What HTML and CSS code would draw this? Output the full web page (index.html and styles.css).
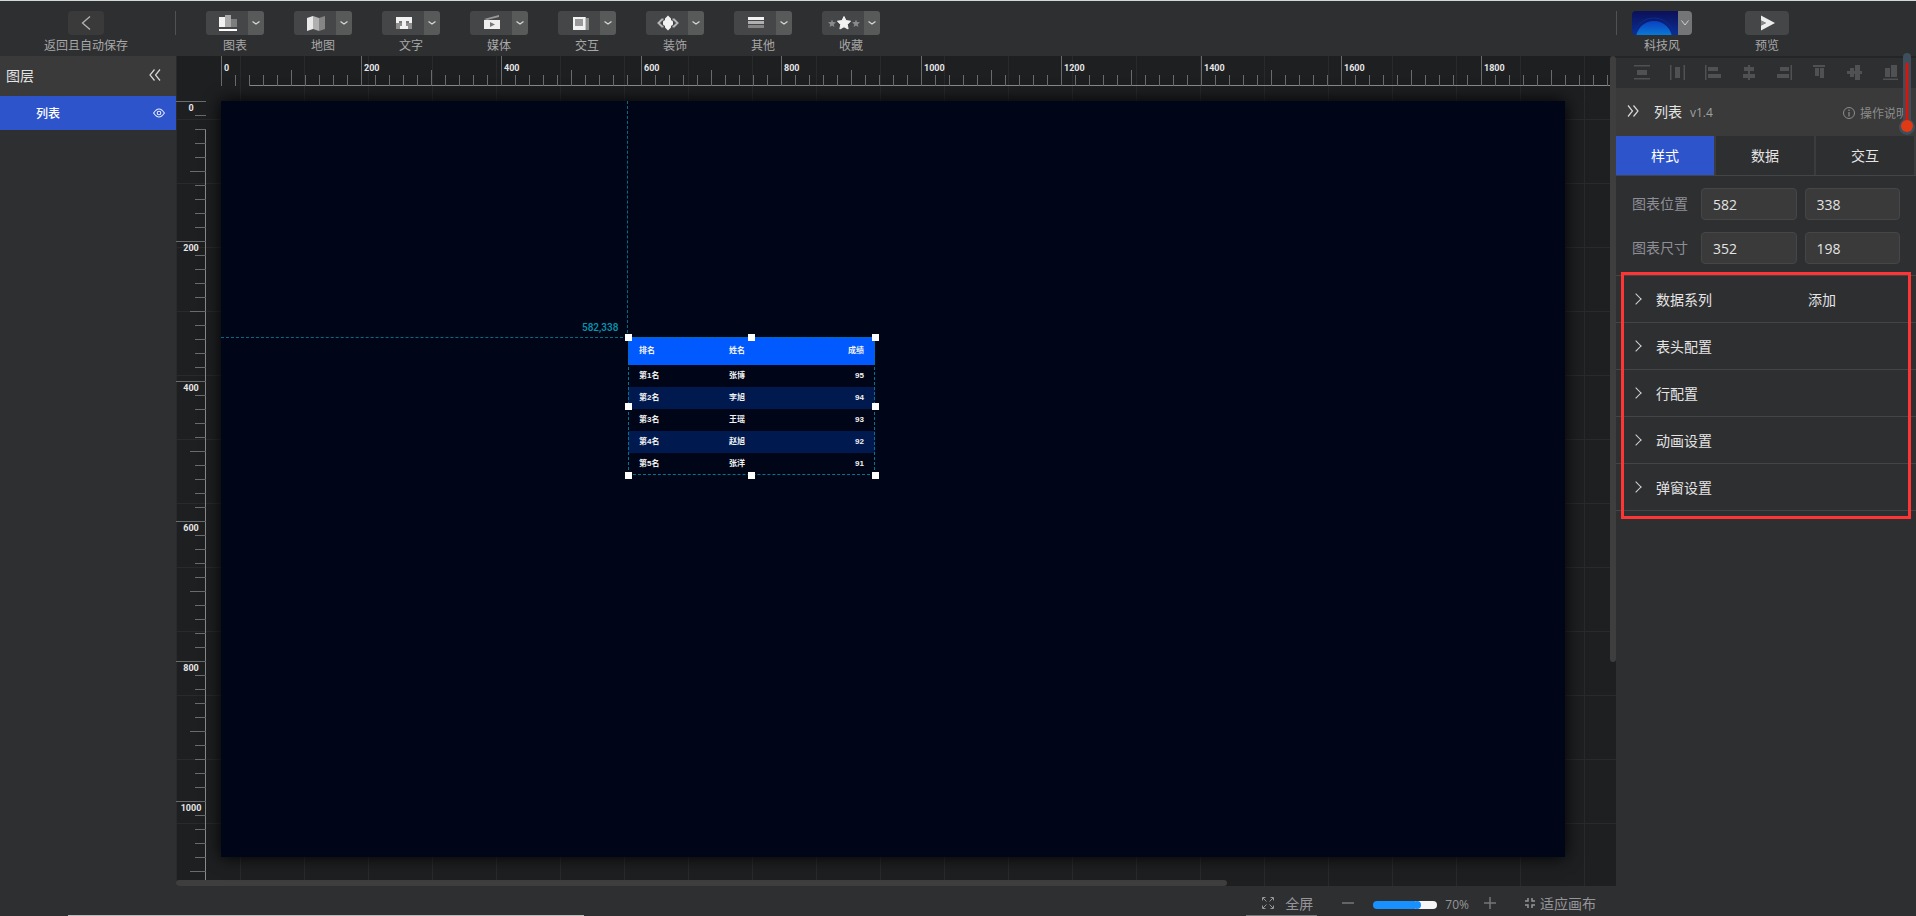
FILE: index.html
```html
<!DOCTYPE html>
<html lang="zh-CN">
<head>
  <meta charset="UTF-8" />
  <title>列表</title>
  <link rel="stylesheet" href="styles.css">
</head>
<body>
  <header class="topbar">
    <div class="back">
      <button class="back-btn" aria-labelledby="backLabel">
        <svg width="10" height="14" viewBox="0 0 10 14"><path d="M9 0.5 1.5 7 9 13.5" fill="none" stroke="#b4b4b4" stroke-width="1.3"/></svg>
      </button>
      <span class="tool-label" id="backLabel">返回且自动保存</span>
    </div>
    <nav class="tools" id="tools"></nav>
    <div class="actions">
      <div class="tool">
        <div class="tool-box theme-box">
          <button class="theme-main" aria-label="科技风">
            <svg width="46" height="24" viewBox="0 0 46 24">
              <defs>
                <linearGradient id="sky" x1="0" y1="0" x2="0" y2="1"><stop offset="0" stop-color="#0c1058"/><stop offset="1" stop-color="#0a2f96"/></linearGradient>
                <linearGradient id="globe" gradientUnits="userSpaceOnUse" x1="0" y1="9" x2="0" y2="24"><stop offset="0" stop-color="#0b3cc0"/><stop offset="1" stop-color="#0a78d4"/></linearGradient>
              </defs>
              <rect width="46" height="24" fill="url(#sky)"/>
              <circle cx="22" cy="28" r="21" fill="none" stroke="#0c2f88"/>
              <circle cx="22" cy="28" r="18" fill="url(#globe)"/>
            </svg>
          </button>
          <button class="theme-drop" aria-label="切换主题">
            <svg width="8" height="6" viewBox="0 0 8 6"><path d="M0.5 0.5 4 5 7.5 0.5" fill="none" stroke="#d0d0d0"/></svg>
          </button>
        </div>
        <span class="tool-label">科技风</span>
      </div>
      <div class="tool">
        <button class="preview-btn" aria-label="预览">
          <svg width="14" height="16" viewBox="0 0 14 16"><path d="M0 0.5 14 8 0 15.5V10.500L5 8 0 5.500Z" fill="#ededed"/><path d="M0 5.500 5 8 0 10.500Z" fill="#888"/></svg>
        </button>
        <span class="tool-label">预览</span>
      </div>
    </div>
  </header>

  <main class="workspace">
    <aside class="layers">
      <div class="layers-head">
        <h2>图层</h2>
        <button class="icon-btn" aria-label="收起图层">
          <svg width="12" height="12" viewBox="0 0 12 12"><path d="M5.500 0.500 1 6 5.500 11.500M11 0.500 6.500 6 11 11.500" fill="none" stroke="#d8d8d8" stroke-width="1.2"/></svg>
        </button>
      </div>
      <div class="layer-item">
        <span>列表</span>
        <button class="icon-btn" aria-label="显示">
          <svg width="12" height="10" viewBox="0 0 12 10"><path d="M0.600 5Q6-3 11.400 5 6 13 0.600 5Z" fill="none" stroke="#e6ebff" stroke-width="1.100"/><circle cx="6" cy="5" r="1.800" fill="none" stroke="#e6ebff" stroke-width="1.100"/></svg>
        </button>
      </div>
    </aside>

    <section class="center">
      <div class="stage">
        <div class="ruler-x" id="rulerX"></div>
        <div class="ruler-y" id="rulerY"></div>
        <div class="canvas-wrap">
          <div class="canvas">
            <div class="guide-x"></div>
            <div class="guide-y"></div>
            <span class="coords">582,338</span>
            <div class="widget">
              <table class="rank">
                <thead><tr><th>排名</th><th>姓名</th><th>成绩</th></tr></thead>
                <tbody>
                  <tr><td>第1名</td><td>张博</td><td>95</td></tr>
                  <tr><td>第2名</td><td>李旭</td><td>94</td></tr>
                  <tr><td>第3名</td><td>王瑶</td><td>93</td></tr>
                  <tr><td>第4名</td><td>赵旭</td><td>92</td></tr>
                  <tr><td>第5名</td><td>张洋</td><td>91</td></tr>
                </tbody>
              </table>
              <i class="handle top left"></i>
              <i class="handle top mid"></i>
              <i class="handle top right"></i>
              <i class="handle center-y left"></i>
              <i class="handle center-y right"></i>
              <i class="handle bottom left"></i>
              <i class="handle bottom mid"></i>
              <i class="handle bottom right"></i>
            </div>
          </div>
        </div>
        <div class="scroll-y"></div>
        <div class="scroll-x"></div>
      </div>
      <footer class="statusbar">
        <button class="status-btn full">
          <svg width="12" height="12" viewBox="0 0 12 12"><path d="M4.500 4.500 1 1M0.500 3.500V0.500H3.500M7.500 4.500 11 1M8.500 0.500H11.500V3.500M4.500 7.500 1 11M0.500 8.500V11.500H3.500M7.500 7.500 11 11M8.500 11.500H11.500V8.500" fill="none" stroke="#96969a"/></svg>
          全屏
        </button>
        <button class="icon-btn" aria-label="缩小">
          <svg width="12" height="12" viewBox="0 0 12 12"><path d="M0 6H12" stroke="#77777b" stroke-width="1.500"/></svg>
        </button>
        <div class="zoom">
          <input type="range" id="zoomRange" min="0" max="100" value="70" aria-label="缩放">
          <label for="zoomRange">70%</label>
        </div>
        <button class="icon-btn" aria-label="放大">
          <svg width="12" height="12" viewBox="0 0 12 12"><path d="M0 6H12M6 0V12" stroke="#77777b" stroke-width="1.500"/></svg>
        </button>
        <button class="status-btn fit">
          <svg width="10" height="10" viewBox="0 0 10 10"><path d="M0 3H3V0M10 3H7V0M0 7H3V10M10 7H7V10" fill="none" stroke="#96969a" stroke-width="1.500"/></svg>
          适应画布
        </button>
      </footer>
    </section>

    <aside class="props">
      <div class="align-bar" id="alignBar"></div>
      <div class="props-head">
        <button class="icon-btn" aria-label="收起面板">
          <svg width="12" height="12" viewBox="0 0 12 12"><path d="M1 0.500 5.500 6 1 11.500M6.500 0.500 11 6 6.500 11.500" fill="none" stroke="#d8d8d8" stroke-width="1.200"/></svg>
        </button>
        <h2>列表</h2>
        <span class="version">v1.4</span>
        <a class="help" href="#">
          <svg width="12" height="12" viewBox="0 0 12 12"><circle cx="6" cy="6" r="5.500" fill="none" stroke="#8c8c8c"/><path d="M6 2.500V4M6 5V9.500" stroke="#8c8c8c" stroke-width="1.200"/></svg>
          操作说明
        </a>
      </div>
      <div class="tabs">
        <button class="tab active">样式</button>
        <button class="tab">数据</button>
        <button class="tab">交互</button>
      </div>
      <div class="fields">
        <div class="field">
          <label for="posX">图表位置</label>
          <input type="text" id="posX" value="582">
          <input type="text" value="338" aria-label="纵向位置">
        </div>
        <div class="field">
          <label for="sizeW">图表尺寸</label>
          <input type="text" id="sizeW" value="352">
          <input type="text" value="198" aria-label="高度">
        </div>
      </div>
      <div class="sections">
        <div class="section"><button class="section-toggle">数据系列</button><button class="add">添加</button></div>
        <div class="section"><button class="section-toggle">表头配置</button></div>
        <div class="section"><button class="section-toggle">行配置</button></div>
        <div class="section"><button class="section-toggle">动画设置</button></div>
        <div class="section"><button class="section-toggle">弹窗设置</button></div>
        <div class="highlight"></div>
      </div>
      <svg class="marker" width="18" height="84" viewBox="0 0 18 84">
        <path d="M5 69V6a4 4 0 0 1 8 0V69a8 8 0 1 1-8 0Z" fill="#3d4f5c"/>
        <path d="M9 13V76" stroke="#d3170d" stroke-width="3" stroke-linecap="round"/>
        <circle cx="9" cy="75" r="6" fill="#e03a14"/>
      </svg>
    </aside>
  </main>

  <script>
    const tools = [
      { name: '图表', icon: '<path d="M0 2H6V12H0Z" fill="#f2f2f2"/><path d="M6 0H12V12H6Z" fill="#a9a9a9"/><path d="M12 4H18V12H12Z" fill="#7d7d7d"/><path d="M0 14H18V16H0Z" fill="#fff"/>' },
      { name: '地图', icon: '<path d="M0 3 6 1V14L0 16Z" fill="#e9e9e9"/><path d="M6 1 12 3V16L6 14Z" fill="#b0b0b0"/><path d="M12 3 18 1V14L12 16Z" fill="#858585"/>' },
      { name: '文字', icon: '<path d="M1 8H17V14H1Z" fill="#8f8f8f"/><path d="M1 2H17V8H14V6H11V11H13V14H5V11H7V6H4V8H1Z" fill="#f2f2f2"/><path d="M4 6H7V8H4ZM11 6H14V8H11Z" fill="#77787a"/>' },
      { name: '媒体', icon: '<path d="M1 5H17V14H1Z" fill="#eee"/><path d="M1 4 16 0V2L4 5Z" fill="#999"/><path d="M7 7 12 9.500 7 12Z" fill="#777"/>' },
      { name: '交互', icon: '<path d="M4 3H18V15H7Z" fill="#8b8b8b"/><path d="M4 2H15V15H4Z" fill="#c4c4c4"/><path d="M2 2H14V15H2Z" fill="#f2f2f2"/><path d="M4 4H12V11H4Z" fill="#999"/>' },
      { name: '装饰', icon: '<path d="M4.500 4.500H3L-0.500 8 3 11.500H4.500M13.500 4.500H15L18.500 8 15 11.500H13.500" fill="none" stroke="#b5b5b5" stroke-width="2"/><path d="M9 0.500 12 3.500V5L14 6.500V9.500L12 11V12.500L9 15.500 6 12.500V11L4 9.500V6.500L6 5V3.500Z" fill="#f2f2f2"/>' },
      { name: '其他', icon: '<path d="M1 2H17V5H1Z" fill="#f2f2f2"/><path d="M1 6H17V9H1Z" fill="#b0b0b0"/><path d="M1 10H17V13H1Z" fill="#858585"/>' },
      { name: '收藏', icon: '<path d="M9 1.500 11 5.600 15.600 6.200 12.300 9.400 13.100 14 9 11.800 4.900 14 5.700 9.400 2.400 6.200 7 5.600Z" fill="#f2f2f2" stroke="#f2f2f2" stroke-linejoin="round"/><path d="M-3 4.500-2 7 1 7.300-1.200 9.200-.6 12-3 10.500-5.400 12-4.800 9.200-7 7.300-4 7Z" fill="#8b8b8b"/><path transform="translate(24)" d="M-3 4.500-2 7 1 7.300-1.200 9.200-.6 12-3 10.500-5.400 12-4.800 9.200-7 7.300-4 7Z" fill="#8b8b8b"/>' }
    ];

    document.getElementById('tools').innerHTML = tools.map(t => `
      <div class="tool">
        <div class="tool-box">
          <button class="tool-main" aria-label="${t.name}"><svg width="18" height="16" viewBox="0 0 18 16">${t.icon}</svg></button>
          <button class="tool-drop" aria-label="${t.name}列表"><svg width="8" height="4" viewBox="0 0 8 4"><path d="M0.500 0.500 4 3 7.500 0.500" fill="none" stroke="#d8d8d8" stroke-width="1.200"/></svg></button>
        </div>
        <span class="tool-label">${t.name}</span>
      </div>`).join('');

    const aligns = [
      ['垂直分布', 'M0 0H16V1.500H0ZM3 5H13V10H3ZM0 13H16V14.500H0Z'],
      ['水平分布', 'M0 0H1.500V15H0ZM5 2H10V13H5ZM13.500 0H15V15H13.500Z'],
      ['左对齐', 'M0 0H1.500V15H0ZM3 2H13V6H3ZM3 9H16V13H3Z'],
      ['水平居中', 'M7 0H9V15H7ZM3 2H13V6H3ZM2 9H14V13H2Z'],
      ['右对齐', 'M14.500 0H16V15H14.500ZM4 2H13V6H4ZM1 9H13V13H1Z'],
      ['顶对齐', 'M1 0H13V2H1ZM3 3H7V11H3ZM8 3H12V13H8Z'],
      ['垂直居中', 'M0 6H15V9H0ZM3 3H7V12H3ZM8 0H13V15H8Z'],
      ['底对齐', 'M0 13.500H15V15H0ZM2 3H7V12H2ZM8 0H14V12H8Z']
    ];

    document.getElementById('alignBar').innerHTML = aligns.map(([name, d]) =>
      `<button class="icon-btn" aria-label="${name}"><svg width="16" height="16" viewBox="0 0 16 16"><path d="${d}" fill="#505152"/></svg></button>`
    ).join('');

    // one label per 200 canvas units
    function fillRuler(id, max) {
      let html = '';
      for (let n = 0; n <= max; n += 200) html += `<span>${n}</span>`;
      document.getElementById(id).innerHTML = html;
    }
    fillRuler('rulerX', 1800);
    fillRuler('rulerY', 1000);
  </script>
</body>
</html>
```
FILE: styles.css
```css
:root {
  --bar: #2e2f31;
  --head: #393a39;
  --stage: #1e1f21;
  --canvas: #000618;
  --accent: #2e54cb;
  --line: #444547;
  --tick: #6a6b6d;
}

* {
  box-sizing: border-box;
}

body {
  margin: 0;
  height: 100vh;
  display: flex;
  flex-direction: column;
  overflow: hidden;
  background: var(--bar);
  color: #e4e4e4;
  font-family: "Open Sans", "Noto Sans CJK SC", sans-serif;
  font-size: 14px;
}

button {
  border: none;
  padding: 0;
  background: none;
  color: inherit;
  font: inherit;
  cursor: pointer;
}

svg {
  display: block;
  overflow: visible;
}

h2 {
  margin: 0;
  font-size: 14px;
  font-weight: normal;
}

.icon-btn {
  display: flex;
}

/* top bar */
.topbar {
  display: flex;
  flex: none;
  height: 56px;
  padding-top: 10px;
  border-top: 1px solid #d3dbd8;
}

.back {
  width: 176px;
  padding-right: 4px;
  display: flex;
  flex-direction: column;
  align-items: center;
  gap: 2px;
  background: linear-gradient(#505153, #505153) right top / 1px 24px no-repeat;
}

.back-btn {
  display: flex;
  align-items: center;
  justify-content: center;
  width: 36px;
  height: 24px;
  border-radius: 4px;
  background: #393a39;
}

.tool-label {
  color: #a8a8a8;
  font-size: 12px;
  line-height: 18px;
}

.tools {
  flex: 1;
  display: flex;
  gap: 30px;
  padding-left: 30px;
}

.tool {
  display: flex;
  flex-direction: column;
  align-items: center;
  gap: 2px;
}

.tool-box {
  display: flex;
  height: 24px;
  border-radius: 3px;
  overflow: hidden;
}

.tool-main,
.tool-drop,
.theme-drop,
.preview-btn {
  display: flex;
  align-items: center;
  justify-content: center;
  background: #454648;
}

.tool-main {
  width: 42px;
  padding-left: 2px;
}

.tool-drop {
  width: 16px;
  background: #585959;
}

.actions {
  width: 300px;
  display: flex;
  gap: 53px;
  padding-left: 16px;
  background: linear-gradient(#505153, #505153) left top / 1px 24px no-repeat;
}

.theme-box {
  border-radius: 4px;
}

.theme-main svg {
  overflow: hidden;
}

.theme-drop {
  width: 14px;
  background: #747577;
}

.preview-btn {
  width: 44px;
  height: 24px;
  padding-left: 2px;
  border-radius: 4px;
}

/* layout */
.workspace {
  flex: 1;
  min-height: 0;
  display: grid;
  grid-template-columns: 176px 1fr 300px;
}

.center {
  display: flex;
  flex-direction: column;
  min-width: 0;
  min-height: 0;
}

/* layers */
.layers {
  background: linear-gradient(#bbb, #bbb) right bottom / 108px 1px no-repeat;
}

.layers-head {
  display: flex;
  align-items: center;
  justify-content: space-between;
  height: 40px;
  padding: 0 15px 2px 6px;
  background: var(--head);
}

.layer-item {
  display: flex;
  align-items: center;
  justify-content: space-between;
  height: 34px;
  padding: 0 11px 0 36px;
  background: var(--accent);
  color: #fff;
  font-size: 12px;
  font-weight: 500;
}

/* stage */
.stage {
  flex: 1;
  min-height: 0;
  position: relative;
  display: grid;
  grid-template-columns: 30px 1fr 6px;
  grid-template-rows: 30px 1fr 6px;
  overflow: hidden;
  background:
    linear-gradient(90deg, #292a2c 1px, transparent 1px) 0 0 / 64px 64px,
    linear-gradient(#292a2c 1px, transparent 1px) 0 -1px / 64px 64px,
    var(--stage);
}

.ruler-x,
.ruler-y {
  display: flex;
  overflow: hidden;
  color: #e6e6e6;
  font-family: Roboto, sans-serif;
  font-size: 9px;
  font-weight: bold;
  line-height: 12px;
}

.ruler-x {
  grid-area: 1 / 2;
  margin-left: 15px;
  background:
    linear-gradient(90deg, var(--tick) 1px, transparent 1px) 0 0 / 140px 30px,
    linear-gradient(90deg, var(--tick) 1px, transparent 1px) 70px 100% / 140px 16px repeat-x,
    linear-gradient(90deg, var(--tick) 1px, transparent 1px) 0 100% / 14px 11px repeat-x,
    linear-gradient(#8a8a8a, #8a8a8a) 29px 100% / 100% 1px no-repeat;
}

.ruler-x span {
  flex: none;
  width: 140px;
  padding: 6px 0 0 3px;
}

.ruler-y {
  grid-area: 2 / 1;
  flex-direction: column;
  margin-top: 15px;
  text-align: center;
  background:
    linear-gradient(var(--tick) 1px, transparent 1px) 0 0 / 30px 140px,
    linear-gradient(var(--tick) 1px, transparent 1px) 100% 70px / 16px 140px repeat-y,
    linear-gradient(var(--tick) 1px, transparent 1px) 100% 0 / 11px 14px repeat-y,
    linear-gradient(#8a8a8a, #8a8a8a) 100% 29px / 1px 100% no-repeat;
}

.ruler-y span {
  flex: none;
  height: 140px;
  padding-top: 1px;
}

.canvas-wrap {
  grid-area: 2 / 2;
  display: flex;
  padding: 15px 45px 23px 15px;
}

.canvas {
  flex: 1;
  position: relative;
  background: var(--canvas);
  box-shadow: 0 0 16px #000;
}

.scroll-y,
.scroll-x {
  background: #3e3e3e;
  border-radius: 3px;
}

.scroll-y {
  grid-area: 1 / 3 / 4 / 4;
  height: 73%;
}

.scroll-x {
  grid-area: 3 / 1 / 4 / 4;
  width: 73%;
}

.guide-x,
.guide-y {
  position: absolute;
  top: 0;
  left: 0;
}

.guide-x {
  width: 407px;
  height: 237px;
  border-bottom: 1px dashed #006d86;
}

.guide-y {
  width: 407px;
  height: 237px;
  border-right: 1px dashed #006d86;
}

.coords {
  position: absolute;
  top: 220px;
  left: 361px;
  color: #0596b0;
  font-family: Roboto, sans-serif;
  font-size: 10px;
  font-weight: 500;
  line-height: 14px;
}

.widget {
  position: absolute;
  top: 236px;
  left: 407px;
  width: 247px;
  outline: 1px dashed #00758f;
  outline-offset: -1px;
}

.rank {
  width: 100%;
  border-collapse: collapse;
  table-layout: fixed;
  color: #f2f2f2;
  font-family: "Liberation Sans", "Noto Sans CJK SC", sans-serif;
  font-size: 8px;
  font-weight: bold;
}

.rank th,
.rank td {
  height: 22px;
  padding: 0 11px;
  line-height: 10px;
  text-align: left;
}

.rank th {
  height: 28px;
  background: #005aff;
}

.rank th:nth-child(1) {
  width: 90px;
}

.rank th:last-child,
.rank td:last-child {
  text-align: right;
}

.rank tbody tr:nth-child(even) {
  background: #001a50;
}

.handle {
  position: absolute;
  width: 7px;
  height: 7px;
  background: #fff;
}

.handle.top { top: -3px; }
.handle.center-y { top: calc(50% - 3px); }
.handle.bottom { bottom: -4px; }
.handle.left { left: -3px; }
.handle.mid { left: calc(50% - 4px); }
.handle.right { right: -4px; }

/* status bar */
.statusbar {
  flex: none;
  display: flex;
  align-items: center;
  justify-content: flex-end;
  height: 30px;
  padding: 3px 20px 0 0;
  gap: 29px;
  color: #96969a;
  background:
    linear-gradient(#bbb, #bbb) left bottom / 408px 1px no-repeat,
    linear-gradient(#77787a, #77787a) 1070px 100% / 71px 1px no-repeat;
}

.statusbar > .icon-btn + .zoom {
  margin-left: -10px;
}

.status-btn {
  display: flex;
  align-items: center;
  gap: 5px;
}

.status-btn.full {
  gap: 11px;
}

.zoom {
  display: flex;
  align-items: center;
  gap: 8px;
  margin-right: -14px;
  padding-top: 4px;
  font-size: 12px;
}

.zoom input {
  appearance: none;
  width: 64px;
  height: 8px;
  margin: 0;
  border-radius: 4px;
  background: linear-gradient(90deg, #1890ff 66%, #f5f5f5 66%);
}

.zoom input::-webkit-slider-thumb {
  appearance: none;
  width: 8px;
  height: 8px;
  border-radius: 4px;
  background: #1890ff;
}

/* properties */
.props {
  position: relative;
}

.align-bar {
  display: flex;
  align-items: center;
  justify-content: space-between;
  height: 32px;
  padding: 0 17px 0 18px;
  border-top: 2px solid #242527;
}

.props-head {
  display: flex;
  align-items: center;
  height: 48px;
  padding: 0 0 2px 11px;
  overflow: hidden;
  background: var(--head);
  white-space: nowrap;
}

.props-head h2 {
  margin-left: 15px;
}

.version {
  margin-left: 8px;
  padding-top: 2px;
  color: #a0a0a0;
  font-size: 12px;
}

.help {
  display: flex;
  align-items: center;
  gap: 5px;
  margin: 4px 8px 0 auto;
  color: #8c8c8c;
  font-size: 12px;
  text-decoration: none;
}

.tabs {
  display: flex;
  height: 40px;
  border-bottom: 1px solid var(--line);
}

.tab {
  flex: 1;
  padding-bottom: 2px;
  border-right: 2px solid #3b3c3e;
}

.tab.active {
  background: var(--accent);
  color: #fff;
}

.fields {
  display: flex;
  flex-direction: column;
  gap: 12px;
  padding: 12px 16px 11px;
}

.field {
  display: flex;
  align-items: center;
  gap: 8px;
}

.field label {
  flex: none;
  width: 61px;
  padding-bottom: 2px;
  color: #8e8e96;
  white-space: nowrap;
}

.field input {
  flex: 1;
  min-width: 0;
  height: 32px;
  padding: 0 11px;
  border: 1px solid #454647;
  border-radius: 4px;
  background: var(--head);
  color: #e4e4e4;
  font: inherit;
}

.sections {
  position: relative;
  border-top: 1px solid var(--line);
}

.section {
  display: flex;
  align-items: center;
  height: 47px;
  border-bottom: 1px solid var(--line);
}

.section-toggle {
  display: flex;
  align-items: center;
  width: 192px;
  padding-left: 16px;
  gap: 16px;
}

.section-toggle::before {
  content: "";
  width: 7px;
  height: 7px;
  border: solid #d0d0d0;
  border-width: 1px 1px 0 0;
  transform: rotate(45deg);
}

/* frame over the collapsed groups */
.highlight {
  position: absolute;
  inset: -4px 5px -8px;
  border: 3px solid #ff3535;
  pointer-events: none;
}

.marker {
  position: absolute;
  top: -5px;
  right: 0;
}
```
